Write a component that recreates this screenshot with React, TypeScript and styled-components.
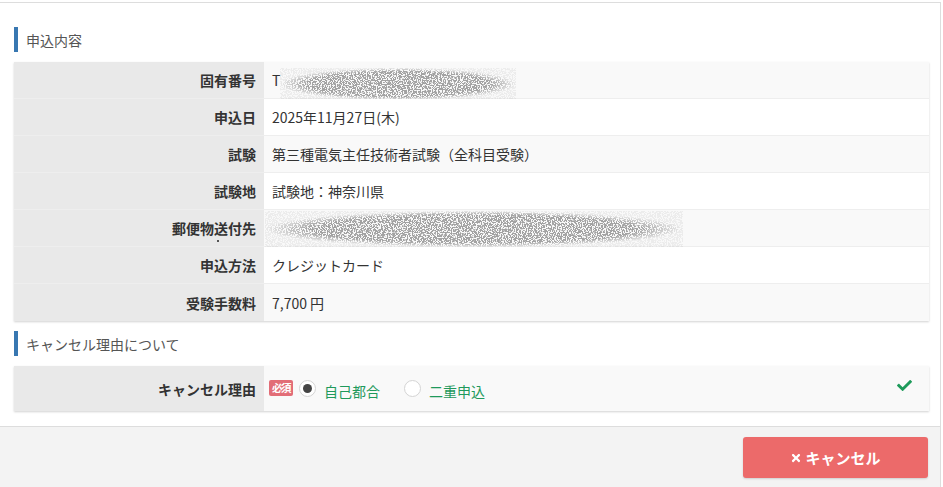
import React from "react";
import styled, { createGlobalStyle } from "styled-components";
import { FaCheck, FaTimes } from "react-icons/fa";

const GlobalStyle = createGlobalStyle`
  html, body {
    margin: 0;
    padding: 0;
    background: #ffffff;
  }
  body {
    padding-top: 2px;
    font-family: "Noto Sans CJK JP", "Liberation Sans", sans-serif;
    font-size: 14px;
    color: #333333;
    overflow: hidden;
  }
`;

interface Row {
  label: string;
  value?: string;
  mask?: { width: number; height: number; seed: number; prefix?: string; shift: number; lead: number };
  dot?: boolean;
}

const rows: Row[] = [
  { label: "固有番号", mask: { width: 236, height: 32, seed: 4, prefix: "T", shift: 4, lead: 0 } },
  { label: "申込日", value: "2025年11月27日(木)" },
  { label: "試験", value: "第三種電気主任技術者試験（全科目受験）" },
  { label: "試験地", value: "試験地：神奈川県" },
  { label: "郵便物送付先", mask: { width: 418, height: 36, seed: 9, shift: 1, lead: -7 }, dot: true },
  { label: "申込方法", value: "クレジットカード" },
  { label: "受験手数料", value: "7,700 円" },
];

// mosaic-like noise standing in for the blurred-out personal data
const Redacted = ({ width, height, seed }: { width: number; height: number; seed: number }) => {
  const id = `noise-${seed}`;
  return (
    <svg width={width} height={height} viewBox={`0 0 ${width} ${height}`}>
      <defs>
        <filter id={id} x="0" y="0" width="100%" height="100%">
          <feTurbulence type="fractalNoise" baseFrequency="0.8" numOctaves="2" seed={seed} />
          <feColorMatrix
            type="matrix"
            values="0 0 0 0 0.36  0 0 0 0 0.36  0 0 0 0 0.36  0 0 0 14 -6.2"
          />
        </filter>
        <radialGradient id={`${id}-g`} cx="50%" cy="50%" r="50%">
          <stop offset="0%" stopColor="#fff" stopOpacity="1" />
          <stop offset="78%" stopColor="#fff" stopOpacity="1" />
          <stop offset="100%" stopColor="#fff" stopOpacity="0.15" />
        </radialGradient>
        <mask id={`${id}-m`}>
          <rect width={width} height={height} fill={`url(#${id}-g)`} />
        </mask>
      </defs>
      <rect width={width} height={height} filter={`url(#${id})`} mask={`url(#${id}-m)`} />
    </svg>
  );
};

const App = () => {
  return (
    <>
      <GlobalStyle />
      <Panel>
        <Body>
          <Heading>申込内容</Heading>
          <Table>
            {rows.map((row, i) => (
              <TableRow key={row.label}>
                <Label $dot={row.dot}>{row.label}</Label>
                <Value $striped={i % 2 === 0}>
                  {row.value}
                  {row.mask && (
                    <>
                      {row.mask.prefix && <span>{row.mask.prefix}</span>}
                      <MaskWrap $shift={row.mask.shift} $lead={row.mask.lead}>
                        <Redacted
                          width={row.mask.width}
                          height={row.mask.height}
                          seed={row.mask.seed}
                        />
                      </MaskWrap>
                    </>
                  )}
                </Value>
              </TableRow>
            ))}
          </Table>

          <Heading>キャンセル理由について</Heading>
          <Table>
            <TableRow $tall>
              <Label>キャンセル理由</Label>
              <Value $striped>
                <Required>必須</Required>
                <RadioGroup>
                  <RadioItem>
                    <Radio $checked />
                    自己都合
                  </RadioItem>
                  <RadioItem>
                    <Radio />
                    二重申込
                  </RadioItem>
                </RadioGroup>
                <Valid>
                  <FaCheck />
                </Valid>
              </Value>
            </TableRow>
          </Table>
        </Body>
        <Footer>
          <CancelButton type="button">
            <FaTimes />
            キャンセル
          </CancelButton>
        </Footer>
      </Panel>
    </>
  );
};

export default App;

const Panel = styled.div`
  width: 940px;
  margin-left: -1px;
  border: 1px solid #dddddd;
  border-bottom: none;
  background: #ffffff;
`;

const Body = styled.div`
  padding: 24px 11px 15px 14px;
`;

const Heading = styled.h3`
  margin: 0 0 10px;
  height: 25px;
  display: flex;
  align-items: center;
  padding-left: 8px;
  border-left: 4px solid #3877b1;
  font-size: 14px;
  font-weight: normal;
  color: #555555;
`;

const Table = styled.div`
  display: flex;
  flex-direction: column;
  margin-bottom: 10px;
  box-shadow: 0 1px 2px rgba(0, 0, 0, 0.18);

  &:last-child {
    margin-bottom: 0;
  }
`;

const TableRow = styled.div<{ $tall?: boolean }>`
  display: grid;
  grid-template-columns: 250px 1fr;
  height: ${(p) => (p.$tall ? 45 : 37)}px;
  border-bottom: 1px solid #eeeeee;
  box-sizing: border-box;

  &:last-child {
    border-bottom: none;
  }
`;

const Label = styled.div<{ $dot?: boolean }>`
  position: relative;
  display: flex;
  align-items: center;
  justify-content: flex-end;
  padding-right: 8px;
  background: #e9e9e9;
  font-weight: bold;
  color: #333333;

  &::after {
    content: "";
    display: ${(p) => (p.$dot ? "block" : "none")};
    position: absolute;
    left: 203px;
    top: 30px;
    width: 2px;
    height: 2px;
    background: #555555;
  }
`;

const Value = styled.div<{ $striped?: boolean }>`
  position: relative;
  display: flex;
  align-items: center;
  padding-left: 8px;
  background: ${(p) => (p.$striped ? "#f9f9f9" : "#ffffff")};
  color: #333333;
  white-space: nowrap;
`;

const MaskWrap = styled.span<{ $shift: number; $lead: number }>`
  display: inline-flex;
  margin-left: ${(p) => p.$lead}px;
  transform: translateY(${(p) => p.$shift}px);
`;

const Required = styled.span`
  display: inline-flex;
  align-items: center;
  justify-content: center;
  width: 24px;
  height: 16px;
  margin-left: -3px;
  margin-top: -2px;
  border-radius: 2px;
  background: #e26d77;
  color: #ffffff;
  font-size: 10.5px;
  font-weight: bold;
  letter-spacing: -1.5px;
`;

const RadioGroup = styled.div`
  display: flex;
  align-items: center;
  gap: 24px;
  margin-left: 6px;
  padding-top: 4px;
`;

const RadioItem = styled.label`
  display: flex;
  align-items: center;
  gap: 8px;
  color: #1f9a5c;
  font-size: 14px;
`;

const Radio = styled.span<{ $checked?: boolean }>`
  position: relative;
  width: 15px;
  height: 15px;
  margin-top: -4px;
  border-radius: 50%;
  border: 1px solid #d4d4d4;
  background: #ffffff;

  &::after {
    content: "";
    display: ${(p) => (p.$checked ? "block" : "none")};
    position: absolute;
    left: 3px;
    top: 3px;
    width: 9px;
    height: 9px;
    border-radius: 50%;
    background: #444444;
  }
`;

const Valid = styled.span`
  display: flex;
  margin-left: auto;
  margin-right: 17px;
  margin-top: -6px;
  color: #1d9a5a;
  font-size: 15px;
`;

const Footer = styled.div`
  display: flex;
  justify-content: flex-end;
  padding: 10px 12px 10px 0;
  background: #f3f3f3;
  border-top: 1px solid #dddddd;
`;

const CancelButton = styled.button`
  display: flex;
  align-items: center;
  justify-content: center;
  gap: 3px;
  width: 185px;
  height: 41px;
  border: none;
  border-radius: 3px;
  background: #ec6a6a;
  box-shadow: 0 1px 2px rgba(0, 0, 0, 0.15);
  color: #ffffff;
  font-family: "Noto Sans CJK JP", "Liberation Sans", sans-serif;
  font-size: 15px;
  font-weight: bold;

  svg {
    font-size: 12px;
  }
`;
